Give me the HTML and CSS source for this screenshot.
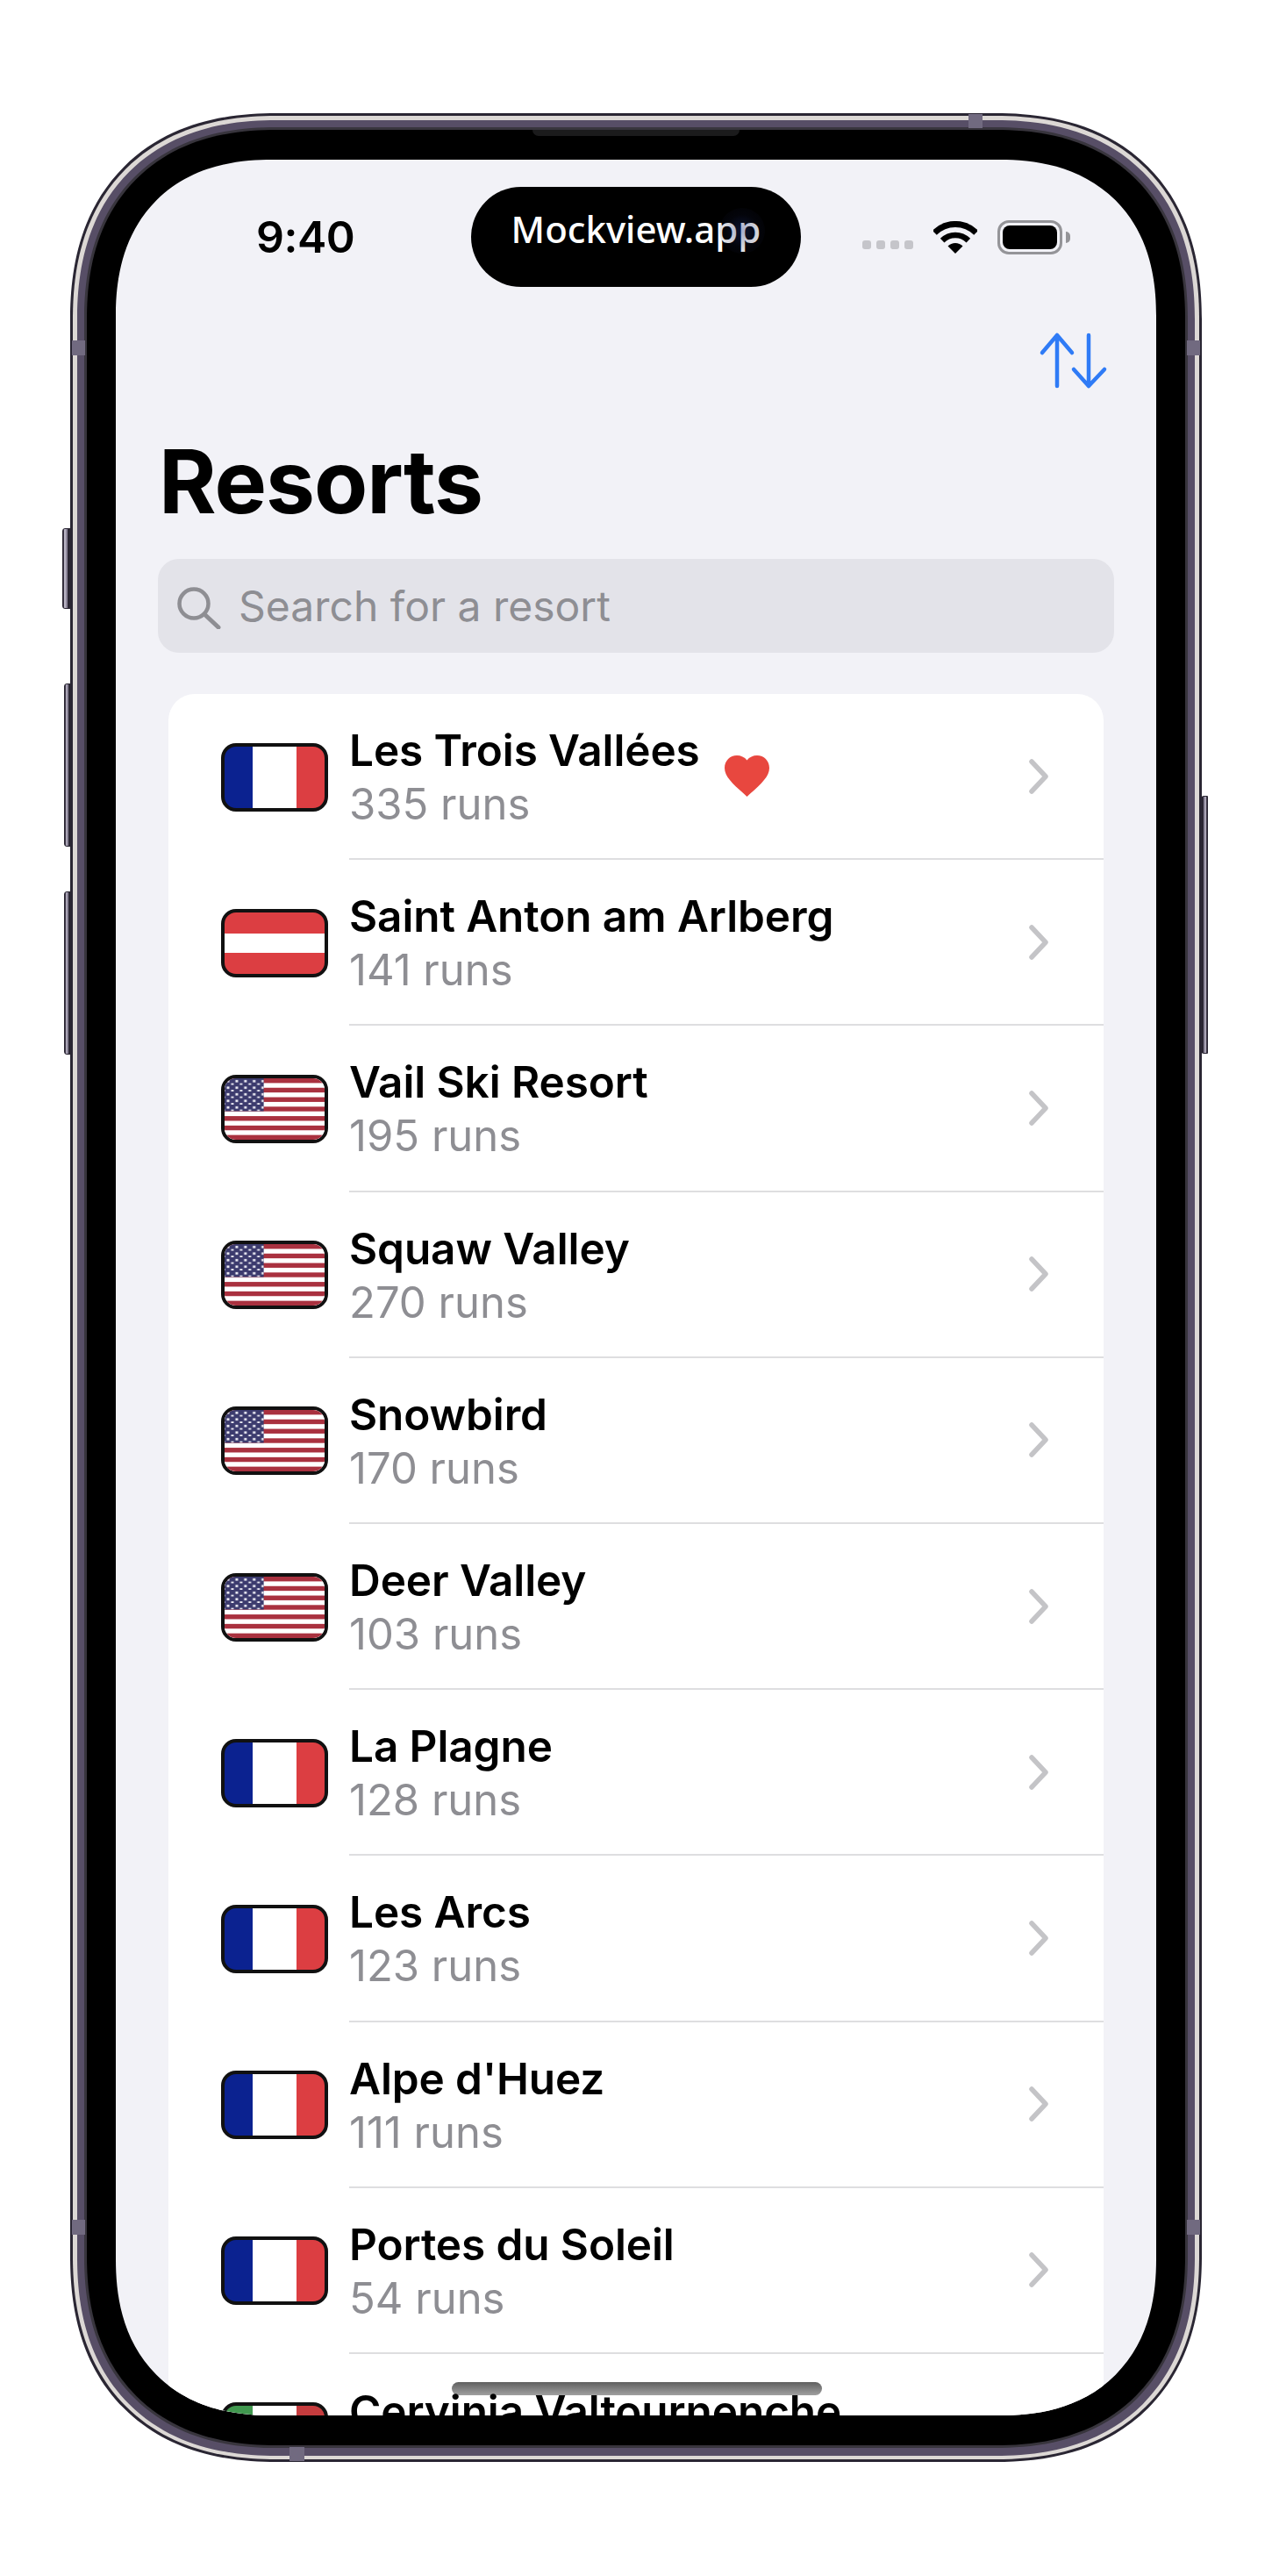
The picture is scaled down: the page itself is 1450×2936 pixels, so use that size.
FILE: index.html
```html
<!DOCTYPE html>
<html lang="en">
<head>
<meta charset="utf-8">
<title>Resorts</title>
<link rel="stylesheet" href="styles.css">
</head>
<body>
<svg class="defs" aria-hidden="true">
  <defs>
    <pattern id="stars" width="10" height="7.6" patternUnits="userSpaceOnUse">
      <rect x="2.5" y="2" width="3" height="2.6" fill="#f4f4fa"/>
      <rect x="7.5" y="5.8" width="3" height="2.4" fill="#f4f4fa"/>
      <rect x="-2.5" y="5.8" width="3" height="2.4" fill="#f4f4fa"/>
    </pattern>
    <symbol id="us" viewBox="0 0 115 71" preserveAspectRatio="none">
      <rect width="115" height="71" fill="#fff"/>
      <g fill="#a9313f">
        <rect y="0" width="115" height="5.46"/><rect y="10.92" width="115" height="5.46"/><rect y="21.85" width="115" height="5.46"/><rect y="32.77" width="115" height="5.46"/><rect y="43.69" width="115" height="5.46"/><rect y="54.62" width="115" height="5.46"/><rect y="65.54" width="115" height="5.46"/>
      </g>
      <rect width="45" height="38" fill="#3c3b6e"/>
      <rect width="45" height="38" fill="url(#stars)"/>
    </symbol>
    <symbol id="chevron" viewBox="0 0 22 40">
      <path d="M3 3L19 20L3 37" fill="none" stroke="#c4c4c7" stroke-width="5.5" stroke-linecap="round" stroke-linejoin="round"/>
    </symbol>
  </defs>
</svg>
<div class="device">
  <span class="btn btn-mute"></span>
  <span class="btn btn-up"></span>
  <span class="btn btn-down"></span>
  <span class="btn btn-power"></span>
  <span class="band band-top"></span>
  <span class="band band-bottom"></span>
  <span class="band band-l1"></span>
  <span class="band band-r1"></span>
  <span class="band band-l2"></span>
  <span class="band band-r2"></span>
  <div class="rim-light">
    <div class="rim-purple">
      <div class="rim-dark">
        <div class="bezel">
          <span class="speaker"></span>
          <main class="screen">
            <header class="status">
              <span class="time">9:40</span>
              <div class="island"><span class="island-text">Mockview.app</span><span class="camera"></span></div>
              <div class="status-right">
                <div class="signal"><i></i><i></i><i></i><i></i></div>
                <svg class="wifi" viewBox="0 0 50 37" width="50" height="37">
                  <path d="M1.3 13.3A33.5 33.5 0 0 1 48.7 13.3" fill="none" stroke="#000" stroke-width="7"/>
                  <path d="M10.15 22.15A21 21 0 0 1 39.85 22.15" fill="none" stroke="#000" stroke-width="6.5"/>
                  <path d="M25 37L16.5 28.5A12 12 0 0 1 33.5 28.5Z" fill="#000"/>
                </svg>
                <div class="battery"><span class="battery-fill"></span></div>
                <span class="battery-nub"></span>
              </div>
            </header>
            <nav class="nav">
              <svg class="sort" viewBox="0 0 80 70" width="80" height="70">
                <path d="M21 64V6M4 26L21 6L38 26M57 6V64M40 45L57 64L75 45" fill="none" stroke="#2f7bf6" stroke-width="4.5" stroke-linecap="round" stroke-linejoin="round"/>
              </svg>
            </nav>
            <h1 class="title">Resorts</h1>
            <div class="search">
              <svg class="search-icon" viewBox="0 0 52 48" width="52" height="48">
                <circle cx="20" cy="19" r="16.5" fill="none" stroke="#8e8e93" stroke-width="4.5"/>
                <path d="M32 31L48 46" fill="none" stroke="#8e8e93" stroke-width="5" stroke-linecap="round"/>
              </svg>
              <span class="search-text">Search for a resort</span>
            </div>
            <section class="list">
              <span class="home"></span>
              <article class="row"><span class="flag flag-fr"></span><div class="body"><div class="text"><div class="name">Les Trois Vallées</div><div class="runs">335 runs</div></div><svg class="heart" viewBox="2 3 20 18.35" width="51" height="47"><path d="M12 21.35l-1.45-1.32C5.4 15.36 2 12.28 2 8.5 2 5.42 4.42 3 7.5 3c1.74 0 3.41.81 4.5 2.09C13.09 3.81 14.76 3 16.5 3 19.58 3 22 5.42 22 8.5c0 3.78-3.4 6.86-8.55 11.54L12 21.35z" fill="#e8473f"/></svg><svg class="chev"><use href="#chevron"/></svg></div></article>
              <article class="row"><span class="flag flag-at"></span><div class="body"><div class="text"><div class="name">Saint Anton am Arlberg</div><div class="runs">141 runs</div></div><svg class="chev"><use href="#chevron"/></svg></div></article>
              <article class="row"><span class="flag"><svg class="flag-svg"><use href="#us"/></svg></span><div class="body"><div class="text"><div class="name">Vail Ski Resort</div><div class="runs">195 runs</div></div><svg class="chev"><use href="#chevron"/></svg></div></article>
              <article class="row"><span class="flag"><svg class="flag-svg"><use href="#us"/></svg></span><div class="body"><div class="text"><div class="name">Squaw Valley</div><div class="runs">270 runs</div></div><svg class="chev"><use href="#chevron"/></svg></div></article>
              <article class="row"><span class="flag"><svg class="flag-svg"><use href="#us"/></svg></span><div class="body"><div class="text"><div class="name">Snowbird</div><div class="runs">170 runs</div></div><svg class="chev"><use href="#chevron"/></svg></div></article>
              <article class="row"><span class="flag"><svg class="flag-svg"><use href="#us"/></svg></span><div class="body"><div class="text"><div class="name">Deer Valley</div><div class="runs">103 runs</div></div><svg class="chev"><use href="#chevron"/></svg></div></article>
              <article class="row"><span class="flag flag-fr"></span><div class="body"><div class="text"><div class="name">La Plagne</div><div class="runs">128 runs</div></div><svg class="chev"><use href="#chevron"/></svg></div></article>
              <article class="row"><span class="flag flag-fr"></span><div class="body"><div class="text"><div class="name">Les Arcs</div><div class="runs">123 runs</div></div><svg class="chev"><use href="#chevron"/></svg></div></article>
              <article class="row"><span class="flag flag-fr"></span><div class="body"><div class="text"><div class="name">Alpe d'Huez</div><div class="runs">111 runs</div></div><svg class="chev"><use href="#chevron"/></svg></div></article>
              <article class="row"><span class="flag flag-fr"></span><div class="body"><div class="text"><div class="name">Portes du Soleil</div><div class="runs">54 runs</div></div><svg class="chev"><use href="#chevron"/></svg></div></article>
              <article class="row"><span class="flag flag-it"></span><div class="body"><div class="text"><div class="name">Cervinia Valtournenche</div><div class="runs runs-empty"></div></div></div></article>
            </section>
          </main>
        </div>
      </div>
    </div>
  </div>
</div>
</body>
</html>
```
FILE: styles.css
```css
* { box-sizing: border-box; }
html, body { margin: 0; padding: 0; background: #fff; }
body { height: 2936px; overflow: hidden; padding: 129px 80px 0; font-family: Inter, "Liberation Sans", sans-serif; color: #000; }
.defs { position: absolute; width: 0; height: 0; }

/* device shell: squircle corners where the browser has corner-shape */
.device, .rim-light, .rim-purple, .rim-dark, .bezel, .screen { corner-shape: superellipse(1.2); }
.device { position: relative; width: 1290px; padding: 3px; background: #2a2633; border-radius: 235px; }
.rim-light { padding: 4.5px 5px; background: #dcd8d5; border-radius: 232px; }
.rim-purple { padding: 8.5px 8px; background: #574e66; border-radius: 227px; }
.rim-dark { padding: 3px; background: #38353d; border-radius: 219px; }
.bezel { position: relative; padding: 34px 33px; background: #000; border-radius: 216px; }
.speaker { position: absolute; top: 0; left: 508px; width: 236px; height: 7px; background: #1b1b1c; border-radius: 0 0 7px 7px; }

.btn { position: absolute; background: linear-gradient(90deg, #3a3444 0 18%, #b9b4c4 18% 40%, #8e889b 40% 62%, #2a2633 62%); border: 1.5px solid #2a2633; }
.btn-mute { left: -9px; top: 473px; width: 10px; height: 92px; border-radius: 3px 0 0 3px; }
.btn-up { left: -7px; top: 650px; width: 8px; height: 186px; border-radius: 3px 0 0 3px; }
.btn-down { left: -7px; top: 887px; width: 8px; height: 186px; border-radius: 3px 0 0 3px; }
.btn-power { right: -7px; top: 778px; width: 8px; height: 294px; border-radius: 0 3px 3px 0; transform: scaleX(-1); }

.band { position: absolute; background: #716a80; z-index: 1; }
.band-top { top: 1px; left: 1024px; width: 16px; height: 16px; }
.band-bottom { bottom: 1px; left: 250px; width: 17px; height: 16px; }
.band-l1 { left: 2px; top: 259px; width: 15px; height: 17px; }
.band-r1 { right: 2px; top: 259px; width: 15px; height: 17px; }
.band-l2 { left: 2px; top: 2401px; width: 15px; height: 17px; }
.band-r2 { right: 2px; top: 2401px; width: 15px; height: 17px; }

/* screen */
.screen { position: relative; height: 2571px; overflow: hidden; background: #f2f2f7; border-radius: 178px; }

.status { display: flex; align-items: center; padding: 31px 0 0 160px; }
.time { width: 245px; font-size: 50px; line-height: 60px; font-weight: 600; letter-spacing: -0.5px; }
.island { position: relative; display: flex; justify-content: center; width: 376px; height: 114px; padding-top: 20px; background: #000; border-radius: 57px; }
.island-text { font-family: "Noto Sans", sans-serif; font-size: 42px; line-height: 56px; font-weight: 500; color: #fff; }
.camera { position: absolute; left: 283px; top: 24px; width: 52px; height: 52px; border-radius: 50%; background: radial-gradient(circle, rgba(30, 50, 130, .4) 0, rgba(20, 25, 60, .18) 50%, rgba(0, 0, 0, 0) 100%); }
.status-right { display: flex; align-items: center; margin-left: 70px; }
.signal { display: flex; gap: 6px; margin-top: 18px; }
.signal i { display: block; width: 10px; height: 10px; background: #c5c5ca; border-radius: 3px; }
.wifi { margin-left: 23px; }
.battery { width: 74px; height: 39px; margin-left: 23px; padding: 3px; border: 3.5px solid #949498; border-radius: 13px; }
.battery-fill { display: block; height: 100%; background: #000; border-radius: 8px; }
.battery-nub { width: 5px; height: 13px; margin-left: 4px; background: #949498; border-radius: 0 6px 6px 0; }

.nav { display: flex; justify-content: flex-end; padding: 49px 54px 0 0; }
.sort { display: block; }

.title { margin: 45px 0 0 49px; font-size: 100px; line-height: 116px; font-weight: 700; letter-spacing: -1px; }

.search { display: flex; align-items: center; gap: 19px; height: 107px; margin: 30px 48px 0; padding-left: 21px; background: #e3e3e9; border-radius: 24px; }
.search-icon { display: block; margin-top: 4px; }
.search-text { font-size: 48px; color: #8e8e93; }

.list { position: relative; margin: 47px 60px 0; background: #fff; border-radius: 30px; }
.home { position: absolute; left: 323px; top: 1924px; width: 422px; height: 15px; background: linear-gradient(#5f5f5f, #a0a0a0); border-radius: 8px; }

.row { position: relative; z-index: 1; display: flex; height: 189.2px; padding-left: 60px; }
.flag { flex: none; align-self: center; width: 122px; height: 78px; margin-right: 24px; overflow: hidden; border: 4px solid #111; border-radius: 17px; background: #fff; }
.flag-svg { display: block; width: 100%; height: 100%; }
.flag-fr { background: linear-gradient(90deg, #0b2290 0 28.3%, #fff 28.3% 71.7%, #dc3e42 71.7%); }
.flag-at { background: linear-gradient(#dc3e42 0 34%, #fff 34% 66%, #dc3e42 66%); }
.flag-it { background: linear-gradient(90deg, #41984f 0 28.3%, #fff 28.3% 71.7%, #c63c3e 71.7%); }

.body { flex: 1; display: flex; align-items: center; min-width: 0; border-bottom: 2px solid #dedee0; }
.row:last-child .body { border-bottom: 0; }
.text { padding-top: 3px; }
.name { font-size: 49.5px; line-height: 62px; font-weight: 600; letter-spacing: -0.1px; }
.runs { font-size: 49px; line-height: 62px; font-weight: 400; color: #8e8e93; }
.runs-empty { height: 62px; }
.heart { display: block; margin-left: 28px; }
.chev { display: block; flex: none; width: 22px; height: 40px; margin-left: auto; margin-right: 63px; }
```
